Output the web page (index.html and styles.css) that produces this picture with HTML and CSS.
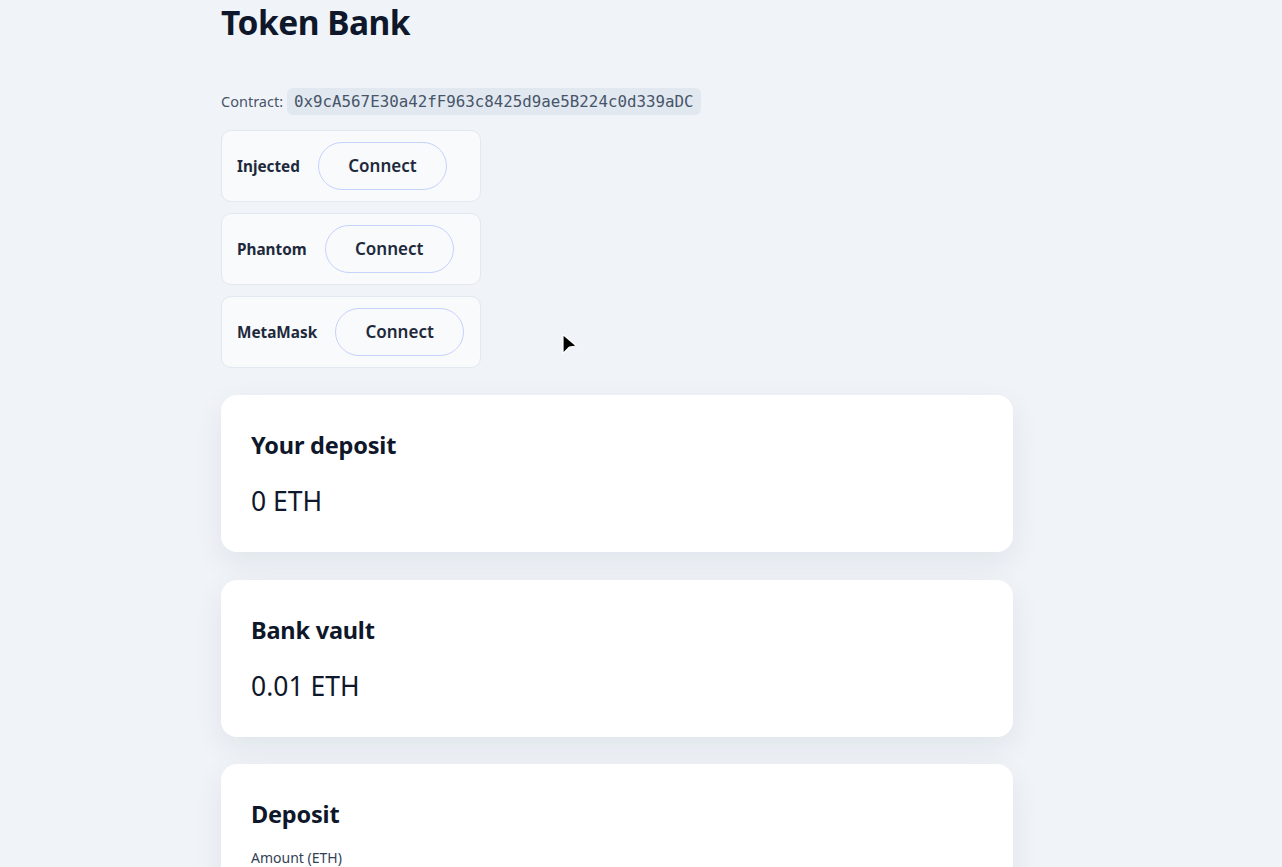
FILE: index.html
```html
<!DOCTYPE html>
<html lang="en">
<head>
<meta charset="utf-8">
<title>Token Bank</title>
<link rel="stylesheet" href="styles.css">
</head>
<body>
<main class="page">
  <h1 class="title">Token Bank</h1>
  <p class="contract">Contract: <code class="addr">0x9cA567E30a42fF963c8425d9ae5B224c0d339aDC</code></p>
  <div class="wallets">
    <div class="wallet"><span class="wallet-name">Injected</span><button class="connect">Connect</button></div>
    <div class="wallet"><span class="wallet-name">Phantom</span><button class="connect">Connect</button></div>
    <div class="wallet"><span class="wallet-name">MetaMask</span><button class="connect">Connect</button></div>
  </div>
  <section class="card">
    <h2 class="card-title">Your deposit</h2>
    <p class="amount">0 ETH</p>
  </section>
  <section class="card">
    <h2 class="card-title">Bank vault</h2>
    <p class="amount">0.01 ETH</p>
  </section>
  <section class="card card-form">
    <h2 class="card-title">Deposit</h2>
    <label class="field-label">Amount (ETH)</label>
    <input class="field" type="text">
  </section>
</main>
<svg class="cursor" width="18" height="22" viewBox="0 0 18 22"><path d="M2 1.5 L15.5 13 L8.5 14 L2 20.5 Z" fill="#000" stroke="#fff" stroke-width="1.2" stroke-linejoin="round"/></svg>
</body>
</html>
```
FILE: styles.css
```css
html, body {
  margin: 0;
  padding: 0;
  background: #f0f4f9;
}
body {
  font-family: "Noto Sans", "Open Sans", sans-serif;
  color: #0f172a;
  overflow: hidden;
  height: 867px;
}
.page {
  width: 792px;
  margin: 0 0 0 221px;
}
.title {
  margin: 0;
  font-size: 33.5px;
  font-weight: 700;
  line-height: 44px;
  letter-spacing: -0.5px;
}
.contract {
  margin: 44px 0 0;
  font-size: 14.5px;
  color: #475569;
  display: flex;
  align-items: center;
  gap: 4px;
  line-height: 27px;
}
.addr {
  font-family: "DejaVu Sans Mono", "Liberation Mono", monospace;
  font-size: 15.8px;
  background: #e2e8f0;
  color: #475569;
  border-radius: 6px;
  padding: 0 7px;
  line-height: 27px;
}
.wallets {
  margin-top: 15px;
  display: flex;
  flex-direction: column;
  gap: 11px;
  width: 260px;
}
.wallet {
  box-sizing: border-box;
  height: 72px;
  background: #f8fafc;
  border: 1px solid #e2e8f0;
  border-radius: 10px;
  padding: 0 15px;
  display: flex;
  align-items: center;
  gap: 18px;
}
.wallet-name {
  font-weight: 700;
  font-size: 15.3px;
  color: #1e293b;
}
.connect {
  font-family: inherit;
  font-weight: 600;
  font-size: 17px;
  color: #1e293b;
  background: #f8fafc;
  border: 1px solid #c7d2fe;
  border-radius: 999px;
  height: 48px;
  width: 129px;
  padding: 0 0 2px;
}
.card {
  background: #fff;
  border-radius: 16px;
  box-shadow: 0 10px 30px rgba(15, 23, 42, 0.07);
  padding: 30px 30px 0;
  height: 157px;
  box-sizing: border-box;
  margin-top: 28px;
}
.wallets + .card { margin-top: 27px; }
.card.card-form { margin-top: 27px; height: 220px; }
.card-title {
  margin: 0;
  font-size: 23.5px;
  font-weight: 700;
  line-height: 40px;
  letter-spacing: -0.2px;
}
.amount {
  margin: 17px 0 0;
  font-size: 26.5px;
  line-height: 38px;
  color: #0f172a;
}
.field-label {
  display: block;
  margin-top: 14px;
  font-size: 14px;
  color: #334155;
}
.field {
  display: block;
  margin-top: 8px;
  width: 100%;
  height: 44px;
  box-sizing: border-box;
  border: 1px solid #cbd5e1;
  border-radius: 10px;
}
.cursor {
  position: absolute;
  left: 561px;
  top: 333px;
}
```
